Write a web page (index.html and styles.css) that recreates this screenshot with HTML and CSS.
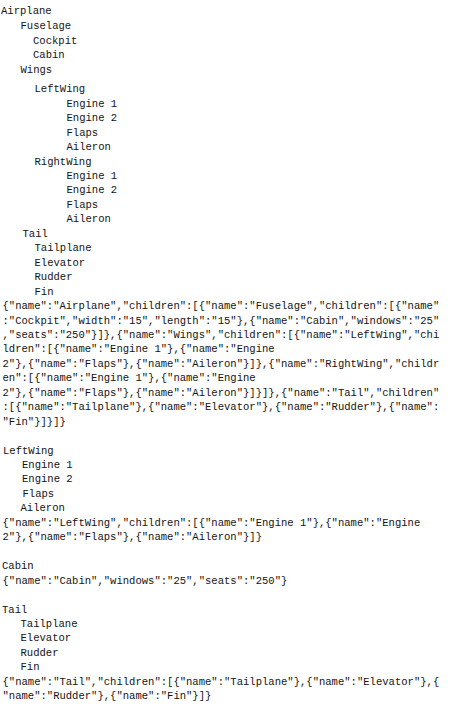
FILE: index.html
```html
<!DOCTYPE html>
<html>
<head>
<meta charset="utf-8">
<link rel="stylesheet" href="styles.css">
</head>
<body>
<div class="doc">
  <div class="tree main">
    <div class="n l0">Airplane</div>
    <div class="n l1">Fuselage</div>
    <div class="n l2">Cockpit</div>
    <div class="n l2">Cabin</div>
    <div class="n l1">Wings</div>
    <div class="n l3 gap">LeftWing</div>
    <div class="n l4">Engine 1</div>
    <div class="n l4">Engine 2</div>
    <div class="n l4">Flaps</div>
    <div class="n l4">Aileron</div>
    <div class="n l3">RightWing</div>
    <div class="n l4">Engine 1</div>
    <div class="n l4">Engine 2</div>
    <div class="n l4">Flaps</div>
    <div class="n l4">Aileron</div>
    <div class="n l5">Tail</div>
    <div class="n l3">Tailplane</div>
    <div class="n l3">Elevator</div>
    <div class="n l3">Rudder</div>
    <div class="n l3">Fin</div>
  </div>
  <div class="json">
    <div class="jl">{"name":"Airplane","children":[{"name":"Fuselage","children":[{"name"</div>
    <div class="jl">:"Cockpit","width":"15","length":"15"},{"name":"Cabin","windows":"25"</div>
    <div class="jl">,"seats":"250"}]},{"name":"Wings","children":[{"name":"LeftWing","chi</div>
    <div class="jl">ldren":[{"name":"Engine 1"},{"name":"Engine</div>
    <div class="jl">2"},{"name":"Flaps"},{"name":"Aileron"}]},{"name":"RightWing","childr</div>
    <div class="jl">en":[{"name":"Engine 1"},{"name":"Engine</div>
    <div class="jl">2"},{"name":"Flaps"},{"name":"Aileron"}]}]},{"name":"Tail","children"</div>
    <div class="jl">:[{"name":"Tailplane"},{"name":"Elevator"},{"name":"Rudder"},{"name":</div>
    <div class="jl">"Fin"}]}]}</div>
  </div>

  <div class="tree section">
    <div class="n s0">LeftWing</div>
    <div class="n s1">Engine 1</div>
    <div class="n s1">Engine 2</div>
    <div class="n s1b">Flaps</div>
    <div class="n s1c">Aileron</div>
  </div>
  <div class="json">
    <div class="jl">{"name":"LeftWing","children":[{"name":"Engine 1"},{"name":"Engine</div>
    <div class="jl">2"},{"name":"Flaps"},{"name":"Aileron"}]}</div>
  </div>

  <div class="tree section">
    <div class="n s0b">Cabin</div>
  </div>
  <div class="json">
    <div class="jl">{"name":"Cabin","windows":"25","seats":"250"}</div>
  </div>

  <div class="tree section">
    <div class="n s0b">Tail</div>
    <div class="n s1c">Tailplane</div>
    <div class="n s1c">Elevator</div>
    <div class="n s1c">Rudder</div>
    <div class="n s1c">Fin</div>
  </div>
  <div class="json">
    <div class="jl">{"name":"Tail","children":[{"name":"Tailplane"},{"name":"Elevator"},{</div>
    <div class="jl">"name":"Rudder"},{"name":"Fin"}]}</div>
  </div>
</div>
</body>
</html>
```
FILE: styles.css
```css
html, body {
  margin: 0;
  padding: 0;
  background: #ffffff;
}

.doc {
  font-family: "Liberation Mono", "Courier New", monospace;
  font-size: 10.55px;
  line-height: 14.46px;
  color: #141414;
  padding: 4px 0 0 1px;
  width: 442px;
}

.n {
  white-space: pre;
}

.l0 { padding-left: 0; }
.l1 { padding-left: 19.5px; }
.l2 { padding-left: 32px; }
.l3 { padding-left: 33.5px; }
.l4 { padding-left: 65.5px; }
.l5 { padding-left: 21.5px; }

.main .l1, .main .l0, .main .l2 {
  line-height: 14.75px;
}

.gap { margin-top: 4.5px; }

.section { margin-top: 14.46px; }

.s0 { padding-left: 2px; }
.s0b { padding-left: 1px; }
.s1 { padding-left: 21px; }
.s1b { padding-left: 21.5px; }
.s1c { padding-left: 19.5px; }

.json {
  padding-left: 1.5px;
}

.jl {
  white-space: pre;
}
```
